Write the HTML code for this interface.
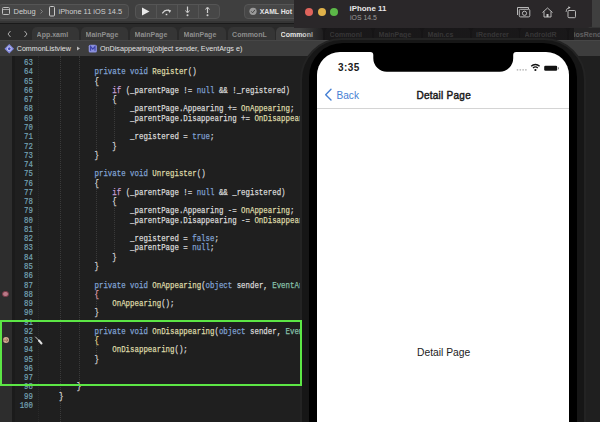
<!DOCTYPE html>
<html><head><meta charset="utf-8">
<style>
*{margin:0;padding:0;box-sizing:border-box}
html,body{width:600px;height:422px;overflow:hidden;background:#1f1f1f;font-family:"Liberation Sans",sans-serif}
div,span.a{position:absolute}
.tbox{top:4px;height:15px;background:#474747;border:1px solid #555;border-radius:4px}
.tt{color:#cfcfcf;font-size:7.5px;white-space:nowrap;line-height:10px}
.tab{top:27px;height:13px;background:#353535;border-radius:5px 5px 0 0}
.tabt{top:29.5px;color:#8e8e8e;font-size:7px;font-weight:bold;white-space:nowrap;line-height:10px}
.ln{left:0;width:33px;text-align:right;font-family:"Liberation Mono",monospace;font-size:9.5px;transform-origin:100% 50%;transform:scaleX(0.779);color:#76a6b8;line-height:9.265px;height:9.265px;-webkit-text-stroke:0.2px currentColor}
.code{left:58.7px;font-family:"Liberation Mono",monospace;font-size:9.5px;transform-origin:0 50%;transform:scaleX(0.779);color:#dadada;line-height:9.265px;white-space:pre;-webkit-text-stroke:0.25px currentColor}
.k{color:#80a2d4}.f{color:#dedaa8}.ty{color:#88c2aa}.p{color:#c59ed2}.br{color:#e0a0b0}.br3{color:#e8d890}
.guide{width:0;border-left:1px dotted #3a3a3a}.guide2{width:0;border-left:1px dotted #2a2a2a}
</style></head><body>
<!-- toolbar -->
<div style="left:0;top:0;width:600px;height:23px;background:#3f3f3f"></div><div style="left:0;top:21px;width:600px;height:2px;background:#353535"></div>
<div class="tbox" style="left:-2px;width:131px"></div>
<div class="tbox" style="left:135px;width:85px"></div>
<div class="tbox" style="left:244px;width:60px"></div>
<div style="left:156px;top:5px;width:1px;height:13px;background:#555"></div>
<div style="left:177px;top:5px;width:1px;height:13px;background:#555"></div>
<div style="left:198px;top:5px;width:1px;height:13px;background:#555"></div>
<svg style="position:absolute;left:0;top:0" width="300" height="23">
  <rect x="2.5" y="7.5" width="7" height="7" rx="1" fill="none" stroke="#bdbdbd" stroke-width="1"/>
  <line x1="2.5" y1="9.5" x2="9.5" y2="9.5" stroke="#bdbdbd" stroke-width="0.8"/>
  <path d="M40.5 9.5 L42.5 11.5 L40.5 13.5" fill="none" stroke="#888" stroke-width="0.9"/>
  <rect x="49.5" y="6.5" width="5" height="9.5" rx="1" fill="none" stroke="#c8c8c8" stroke-width="1"/>
  <path d="M142 7.6 L149.5 11.6 L142 15.6 Z" fill="#e8e8e8"/>
  <path d="M162.3 13.3 Q165.5 8.8 169.3 10.8" fill="none" stroke="#d4d4d4" stroke-width="1.2"/>
  <path d="M167.8 9.3 L171.2 10.5 L169.5 12.9 Z" fill="#d4d4d4"/>
  <rect x="165.7" y="13.8" width="1.6" height="1.4" fill="#e0e0e0"/>
  <line x1="187.5" y1="6.5" x2="187.5" y2="12" stroke="#cfcfcf" stroke-width="1.2"/>
  <path d="M185.5 10.5 L187.5 13 L189.5 10.5" fill="none" stroke="#cfcfcf" stroke-width="1"/>
  <circle cx="187.5" cy="15.3" r="1" fill="#cfcfcf"/>
  <line x1="207.5" y1="8" x2="207.5" y2="13" stroke="#cfcfcf" stroke-width="1.2"/>
  <path d="M205.5 9.5 L207.5 7 L209.5 9.5" fill="none" stroke="#cfcfcf" stroke-width="1"/>
  <circle cx="207.5" cy="15.3" r="1" fill="#cfcfcf"/>
  <circle cx="253" cy="11.3" r="3.6" fill="#9a9a9a"/>
  <path d="M251.2 11.3 L252.6 12.8 L255 9.8" fill="none" stroke="#3c3c3c" stroke-width="0.9"/>
</svg>
<div class="tt" style="left:13.5px;top:6.7px">Debug</div>
<div class="tt" style="left:58.5px;top:6.7px;font-size:7.4px">iPhone 11 iOS 14.5</div>
<div class="tt" style="left:259.7px;top:6.6px;font-weight:bold;color:#e4e4e4;font-size:6.8px">XAML Hot</div>
<!-- tab bar -->
<div style="left:0;top:23px;width:600px;height:17px;background:#2a2a2a"></div>
<div style="left:0;top:23px;width:600px;height:1px;background:#1a1a1a"></div>
<svg style="position:absolute;left:0;top:23px" width="32" height="17">
  <path d="M10.5 8 L8 11 L10.5 14" fill="none" stroke="#aaa" stroke-width="1"/>
  <path d="M24.5 8 L27 11 L24.5 14" fill="none" stroke="#aaa" stroke-width="1"/>
</svg>
<div class="tab" style="left:32.0px;width:47px;background:#353535"></div>
<div class="tabt" style="left:36.6px;width:40px;overflow:hidden;">App.xaml</div>
<div class="tab" style="left:81.0px;width:47px;background:#353535"></div>
<div class="tabt" style="left:85.6px;width:40px;overflow:hidden;">MainPage</div>
<div class="tab" style="left:130.0px;width:47px;background:#353535"></div>
<div class="tabt" style="left:134.6px;width:40px;overflow:hidden;">MainPage</div>
<div class="tab" style="left:179.0px;width:47px;background:#353535"></div>
<div class="tabt" style="left:183.6px;width:40px;overflow:hidden;">MainPage</div>
<div class="tab" style="left:227.5px;width:47px;background:#353535"></div>
<div class="tabt" style="left:232.1px;width:40px;overflow:hidden;">CommonL</div>
<div class="tab" style="left:276.0px;width:47px;background:#404040"></div>
<div class="tabt" style="left:280.6px;width:40px;overflow:hidden;color:#e6e6e6">Commonl</div>
<div class="tab" style="left:325.0px;width:47px;background:#353535"></div>
<div class="tabt" style="left:329.6px;width:40px;overflow:hidden;">Commonl</div>
<div class="tab" style="left:374.0px;width:47px;background:#353535"></div>
<div class="tabt" style="left:378.6px;width:40px;overflow:hidden;">MainPage</div>
<div class="tab" style="left:423.0px;width:47px;background:#353535"></div>
<div class="tabt" style="left:427.6px;width:40px;overflow:hidden;">Main.cs</div>
<div class="tab" style="left:471.5px;width:47px;background:#353535"></div>
<div class="tabt" style="left:476.1px;width:40px;overflow:hidden;">iRenderer</div>
<div class="tab" style="left:520.0px;width:47px;background:#353535"></div>
<div class="tabt" style="left:524.6px;width:40px;overflow:hidden;">AndroidR</div>
<div class="tab" style="left:569.0px;width:47px;background:#353535"></div>
<div class="tabt" style="left:573.6px;width:40px;overflow:hidden;">iosRend</div>
<div style="left:300px;top:27.5px;width:274px;height:13px;background:linear-gradient(90deg,rgba(12,10,12,0) 0px,rgba(12,10,12,0.68) 25px)"></div>
<div style="left:574px;top:27.5px;width:26px;height:13px;background:rgba(12,10,12,0.35)"></div>
<!-- breadcrumb -->
<div style="left:0;top:40px;width:600px;height:15.5px;background:#3d3d3d;border-top:1px solid #464646"></div>
<svg style="position:absolute;left:0;top:40px" width="110" height="16">
  <path d="M9.25 4 L14 8.75 L9.25 13.5 L4.5 8.75 Z" fill="#858be0"/>
  <circle cx="9.25" cy="8.75" r="1.9" fill="#4a50b8" stroke="#e4e4ff" stroke-width="0.8"/>
  <path d="M77 6.5 L80 8.5 L77 10.5 Z" fill="#bbb"/>
  <rect x="88.7" y="4.7" width="8.2" height="7.8" rx="1.5" fill="#8a90dc"/>
  <path d="M90.6 10.8 V6.6 L92.8 9.2 L95 6.6 V10.8" fill="none" stroke="#3c42a8" stroke-width="1.1"/>
</svg>
<div class="tt" style="left:16.8px;top:43.7px;font-size:7.1px;color:#e2e2e2">CommonListview</div>
<div class="tt" style="left:100px;top:43.7px;font-size:7.18px;color:#e2e2e2">OnDisappearing(object sender, EventArgs e)</div>
<!-- editor -->
<div style="left:0;top:55.5px;width:11.5px;height:367px;background:#2d2d2d"></div><div style="left:11.5px;top:55.5px;width:3px;height:367px;background:#1b1b1b"></div>
<div class="guide" style="left:59.7px;top:56px;height:366px"></div><div class="guide2" style="left:37.5px;top:56px;height:366px"></div>
<div class="guide" style="left:78.7px;top:56px;height:326.4px"></div>
<div class="guide" style="left:96.4px;top:86.0px;height:64.9px"></div>
<div class="guide" style="left:96.4px;top:187.9px;height:74.1px"></div>
<div class="guide" style="left:96.4px;top:299.1px;height:9.3px"></div>
<div class="guide" style="left:96.4px;top:345.4px;height:9.3px"></div>
<div class="guide" style="left:114.2px;top:104.5px;height:37.1px"></div>
<div class="guide" style="left:114.2px;top:206.4px;height:46.3px"></div>
<div class="ln" style="top:58.17px">63</div>
<div class="ln" style="top:67.43px">64</div>
<div class="ln" style="top:76.70px">65</div>
<div class="ln" style="top:85.96px">66</div>
<div class="ln" style="top:95.23px">67</div>
<div class="ln" style="top:104.49px">68</div>
<div class="ln" style="top:113.76px">69</div>
<div class="ln" style="top:123.02px">70</div>
<div class="ln" style="top:132.29px">71</div>
<div class="ln" style="top:141.55px">72</div>
<div class="ln" style="top:150.82px">73</div>
<div class="ln" style="top:160.08px">74</div>
<div class="ln" style="top:169.35px">75</div>
<div class="ln" style="top:178.61px">76</div>
<div class="ln" style="top:187.88px">77</div>
<div class="ln" style="top:197.14px">78</div>
<div class="ln" style="top:206.41px">79</div>
<div class="ln" style="top:215.67px">80</div>
<div class="ln" style="top:224.94px">81</div>
<div class="ln" style="top:234.20px">82</div>
<div class="ln" style="top:243.47px">83</div>
<div class="ln" style="top:252.73px">84</div>
<div class="ln" style="top:262.00px">85</div>
<div class="ln" style="top:271.26px">86</div>
<div class="ln" style="top:280.53px">87</div>
<div class="ln" style="top:289.79px">88</div>
<div class="ln" style="top:299.06px">89</div>
<div class="ln" style="top:308.32px">90</div>
<div class="ln" style="top:317.59px">91</div>
<div class="ln" style="top:326.85px">92</div>
<div class="ln" style="top:336.12px">93</div>
<div class="ln" style="top:345.38px">94</div>
<div class="ln" style="top:354.65px">95</div>
<div class="ln" style="top:363.91px">96</div>
<div class="ln" style="top:373.18px">97</div>
<div class="ln" style="top:382.44px">98</div>
<div class="ln" style="top:391.71px">99</div>
<div class="ln" style="top:400.97px">100</div>
<div class="code" style="top:67.43px">        <span class="k">private</span> <span class="k">void</span> <span class="f">Register</span>()</div>
<div class="code" style="top:76.70px">        {</div>
<div class="code" style="top:85.96px">            <span class="p">if</span> (_parentPage != <span class="k">null</span> &amp;&amp; !_registered)</div>
<div class="code" style="top:95.23px">            {</div>
<div class="code" style="top:104.49px">                _parentPage.Appearing += <span class="f">OnAppearing</span>;</div>
<div class="code" style="top:113.76px">                _parentPage.Disappearing += <span class="f">OnDisappearing</span>;</div>
<div class="code" style="top:132.29px">                _registered = <span class="k">true</span>;</div>
<div class="code" style="top:141.55px">            }</div>
<div class="code" style="top:150.82px">        }</div>
<div class="code" style="top:169.35px">        <span class="k">private</span> <span class="k">void</span> <span class="f">Unregister</span>()</div>
<div class="code" style="top:178.61px">        {</div>
<div class="code" style="top:187.88px">            <span class="p">if</span> (_parentPage != <span class="k">null</span> &amp;&amp; _registered)</div>
<div class="code" style="top:197.14px">            {</div>
<div class="code" style="top:206.41px">                _parentPage.Appearing -= <span class="f">OnAppearing</span>;</div>
<div class="code" style="top:215.67px">                _parentPage.Disappearing -= <span class="f">OnDisappearing</span>;</div>
<div class="code" style="top:234.20px">                _registered = <span class="k">false</span>;</div>
<div class="code" style="top:243.47px">                _parentPage = <span class="k">null</span>;</div>
<div class="code" style="top:252.73px">            }</div>
<div class="code" style="top:262.00px">        }</div>
<div class="code" style="top:280.53px">        <span class="k">private</span> <span class="k">void</span> <span class="f">OnAppearing</span>(<span class="k">object</span> sender, <span class="ty">EventArgs</span> e)</div>
<div class="code" style="top:289.79px">        <span class="br">{</span></div>
<div class="code" style="top:299.06px">            <span class="f">OnAppearing</span>();</div>
<div class="code" style="top:308.32px">        }</div>
<div class="code" style="top:326.85px">        <span class="k">private</span> <span class="k">void</span> <span class="f">OnDisappearing</span>(<span class="k">object</span> sender, <span class="ty">EventArgs</span> e)</div>
<div class="code" style="top:336.12px">        <span class="br3">{</span></div>
<div class="code" style="top:345.38px">            <span class="f">OnDisappearing</span>();</div>
<div class="code" style="top:354.65px">        }</div>
<div class="code" style="top:382.44px">    }</div>
<div class="code" style="top:391.71px">}</div>
<!-- breakpoints -->
<div style="left:2.2px;top:290.7px;width:6.6px;height:6.6px;border-radius:50%;background:#b97a88;border:0.8px solid #7a3a48"></div>
<div style="left:2.5px;top:337px;width:6.4px;height:6.4px;border-radius:50%;background:#d0aa92"></div>
<svg style="position:absolute;left:0;top:330px" width="50" height="20">
  <path d="M3 10.2 H8 M6.3 8.5 L8 10.2 L6.3 11.9" fill="none" stroke="#8a5a48" stroke-width="0.7"/>
  <path d="M35.5 7 L39 10.5" stroke="#d0d0d0" stroke-width="1" stroke-linecap="round"/><path d="M39 10.5 L41.5 13.5" stroke="#e0e0e0" stroke-width="2" stroke-linecap="round"/>
</svg>
<!-- simulator -->
<div style="left:294px;top:0;width:298px;height:27.5px;background:#2a2729;border-radius:0 0 5px 0"></div>
<div style="left:592px;top:0;width:8px;height:27px;background:#3f3f3f"></div>
<div style="left:305.4px;top:8.4px;width:8px;height:8px;border-radius:50%;background:#e0645c"></div>
<div style="left:318px;top:8.4px;width:8px;height:8px;border-radius:50%;background:#e0b24a"></div>
<div style="left:330px;top:8.4px;width:8px;height:8px;border-radius:50%;background:#5cb848"></div>
<div style="left:349.5px;top:4px;font-size:7.9px;font-weight:bold;color:#e8e8e8;white-space:nowrap;line-height:10px">iPhone 11</div>
<div style="left:350px;top:13px;font-size:6.9px;color:#9a9a9a;white-space:nowrap;line-height:10px">iOS 14.5</div>
<svg style="position:absolute;left:510px;top:0" width="82" height="27">
  <path d="M7.5 15 V7.5 H18.5 V9" fill="none" stroke="#c8c8c8" stroke-width="0.9"/>
  <rect x="9.3" y="9.3" width="10.5" height="7.6" rx="1.2" fill="#2a2729" stroke="#c8c8c8" stroke-width="0.9"/>
  <circle cx="14.5" cy="13.3" r="2.1" fill="none" stroke="#c8c8c8" stroke-width="0.9"/>
  <path d="M32.5 12.5 L37.5 8 L42.5 12.5 M34 11.5 V17 H41 V11.5" fill="none" stroke="#c8c8c8" stroke-width="0.9"/>
  <rect x="36.5" y="14" width="2" height="3" fill="#c8c8c8"/>
  <rect x="58" y="10.5" width="7.5" height="7.2" rx="1" fill="none" stroke="#c8c8c8" stroke-width="0.9"/>
  <path d="M56 12 Q56 8 59.5 7.6" fill="none" stroke="#c8c8c8" stroke-width="0.8"/>
  <path d="M58.3 6.2 L60.6 7.6 L58.5 9 Z" fill="#c8c8c8"/>
</svg>
<!-- phone -->
<div style="left:300px;top:38px;width:286px;height:500px;border-radius:42px;background:#161616;border:2px solid #232323"></div>
<div style="left:309px;top:43px;width:268px;height:500px;border-radius:34px;background:#000"></div>
<div style="left:317px;top:52px;width:252px;height:500px;border-radius:23px;background:#fff"></div>
<svg style="position:absolute;left:365px;top:44px" width="160" height="30"><path d="M0 0 H160 V8 H151.2 Q148.2 8 148.2 11 V14.3 A13.5 13.5 0 0 1 134.7 27.8 H21.8 A13.5 13.5 0 0 1 8.3 14.3 V11 Q8.3 8 5.3 8 H0 Z" fill="#000"/></svg>
<div style="left:338px;top:62px;font-size:10px;font-weight:bold;color:#1a1a1a;line-height:12px;letter-spacing:0.45px">3:35</div>
<svg style="position:absolute;left:317px;top:52px" width="252" height="60">
  <circle cx="200.5" cy="17.8" r="0.9" fill="#bbb"/><circle cx="203.3" cy="17.8" r="0.9" fill="#bbb"/>
  <circle cx="206.1" cy="17.8" r="0.9" fill="#bbb"/><circle cx="208.9" cy="17.8" r="0.9" fill="#bbb"/>
  <path d="M214.2 14.2 A6 6 0 0 1 222.6 14.2" fill="none" stroke="#111" stroke-width="1.3"/>
  <path d="M216 16 A3.5 3.5 0 0 1 220.8 16" fill="none" stroke="#111" stroke-width="1.3"/>
  <circle cx="218.4" cy="18" r="1.1" fill="#111"/>
  <rect x="227.2" y="13.8" width="13" height="5" rx="1.3" fill="#111"/>
  <rect x="241" y="15.3" width="1" height="2" fill="#888"/>
  <path d="M14 37.3 L8.7 42.7 L14 48" fill="none" stroke="#4680d4" stroke-width="1.4" stroke-linecap="round" stroke-linejoin="round"/>
</svg>
<div style="left:336.5px;top:90px;font-size:10.1px;color:#4680d4;line-height:12px">Back</div>
<div style="left:416.5px;top:90.3px;font-size:10px;font-weight:normal;-webkit-text-stroke:0.45px #1a1a1a;letter-spacing:0.25px;color:#1a1a1a;line-height:12px">Detail Page</div>
<div style="left:317px;top:108px;width:252px;height:1px;background:#d4d4d4"></div>
<div style="left:417px;top:347.4px;font-size:10.3px;color:#1c1c1c;line-height:12px">Detail Page</div>
<div style="left:0px;top:320.2px;width:302px;height:65.6px;border:2px solid #5ce645"></div>
</body></html>
